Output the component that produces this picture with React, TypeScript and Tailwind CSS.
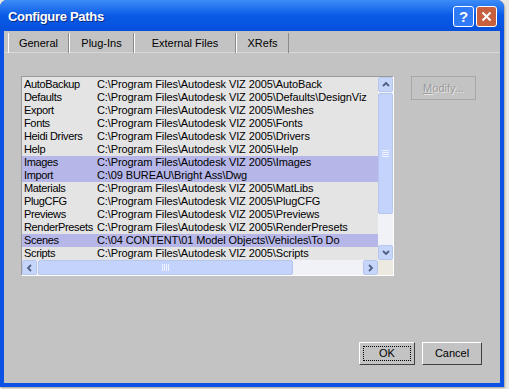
import React from 'react';

const rows: { name: string; path: string; sel?: boolean }[] = [
  { name: 'AutoBackup', path: 'C:\\Program Files\\Autodesk VIZ 2005\\AutoBack' },
  { name: 'Defaults', path: 'C:\\Program Files\\Autodesk VIZ 2005\\Defaults\\DesignViz' },
  { name: 'Export', path: 'C:\\Program Files\\Autodesk VIZ 2005\\Meshes' },
  { name: 'Fonts', path: 'C:\\Program Files\\Autodesk VIZ 2005\\Fonts' },
  { name: 'Heidi Drivers', path: 'C:\\Program Files\\Autodesk VIZ 2005\\Drivers' },
  { name: 'Help', path: 'C:\\Program Files\\Autodesk VIZ 2005\\Help' },
  { name: 'Images', path: 'C:\\Program Files\\Autodesk VIZ 2005\\Images', sel: true },
  { name: 'Import', path: 'C:\\09 BUREAU\\Bright Ass\\Dwg', sel: true },
  { name: 'Materials', path: 'C:\\Program Files\\Autodesk VIZ 2005\\MatLibs' },
  { name: 'PlugCFG', path: 'C:\\Program Files\\Autodesk VIZ 2005\\PlugCFG' },
  { name: 'Previews', path: 'C:\\Program Files\\Autodesk VIZ 2005\\Previews' },
  { name: 'RenderPresets', path: 'C:\\Program Files\\Autodesk VIZ 2005\\RenderPresets' },
  { name: 'Scenes', path: 'C:\\04 CONTENT\\01 Model Objects\\Vehicles\\To Do', sel: true },
  { name: 'Scripts', path: 'C:\\Program Files\\Autodesk VIZ 2005\\Scripts' },
];

const tabs = [
  { label: 'General', w: 'w-[61px]' },
  { label: 'Plug-Ins', w: 'w-[65px]' },
  { label: 'External Files', w: 'w-[102px]' },
  { label: 'XRefs', w: 'w-[53px]' },
];

const Chevron = ({ dir }: { dir: 'up' | 'down' | 'left' | 'right' }) => {
  const d = {
    up: 'M2 6 L5 3 L8 6',
    down: 'M2 3 L5 6 L8 3',
    left: 'M6 2 L3 5 L6 8',
    right: 'M3 2 L6 5 L3 8',
  }[dir];
  return (
    <svg width="10" height="10" viewBox="0 0 10 10">
      <path d={d} fill="none" stroke="#4d6185" strokeWidth="1.8" />
    </svg>
  );
};

const ScrollBtn = ({ dir }: { dir: 'up' | 'down' | 'left' | 'right' }) => (
  <div className="w-[15px] h-[15px] shrink-0 flex items-center justify-center rounded-[2px] border border-[#b7c6ec] bg-[#c6d6fb]">
    <Chevron dir={dir} />
  </div>
);

export default function App() {
  return (
    <div className="w-[509px] h-[389px] bg-[#e9e8e2] font-['Liberation_Sans',Arial,sans-serif]">
      <div className="w-[504px] h-[387px] rounded-t-[7px] bg-[#0b52e4] flex flex-col shadow-[1px_1px_2px_rgba(0,0,0,0.3)]">
        <div className="h-[31px] shrink-0 flex items-center pl-[8px] pr-[7px] pt-[2px] rounded-t-[7px] bg-gradient-to-b from-[#3c8cf8] via-[#0a5ae6] to-[#0550dc]">
          <span className="text-white font-bold text-[13px] tracking-[-0.3px] [text-shadow:1px_1px_0_#0a2a80]">Configure Paths</span>
          <div className="ml-auto flex gap-[2px]">
            <div className="w-[21px] h-[21px] rounded-[3px] border border-white bg-[#2f7af6] flex items-center justify-center text-white font-bold text-[15px] leading-none">?</div>
            <div className="w-[21px] h-[21px] rounded-[3px] border border-white bg-[#c8603f] flex items-center justify-center">
              <svg width="11" height="11" viewBox="0 0 11 11">
                <path d="M1.5 1.5 L9.5 9.5 M9.5 1.5 L1.5 9.5" stroke="white" strokeWidth="2" />
              </svg>
            </div>
          </div>
        </div>
        <div className="flex-1 mx-[4px] mb-[4px] bg-[#c3c3c3] flex flex-col">
          <div className="flex pl-[4px] pt-[2px] h-[22px] border-b border-[#d8d8d8]">
            {tabs.map((t) => (
              <div
                key={t.label}
                className={`${t.w} h-[20px] flex items-center justify-center text-[11px] text-black border-r border-r-[#8a8a8a] border-l border-l-white`}
              >
                {t.label}
              </div>
            ))}
          </div>
          <div className="flex pl-[17px] pt-[23px]">
            <div className="w-[373px] h-[200px] border-t border-l border-t-[#9a9a9a] border-l-[#9a9a9a] border-b border-r border-b-white border-r-white flex flex-col">
              <div className="flex flex-1 min-h-0">
                <div className="flex-1 bg-[#e4e4e4] pt-[1px] overflow-hidden">
                  {rows.map((r) => (
                    <div
                      key={r.name}
                      className={`flex h-[13px] items-center text-[11px] leading-[13px] text-black whitespace-nowrap pl-[2px] ${
                        r.sel ? 'bg-[#b6b6e8]' : ''
                      }`}
                    >
                      <span className="w-[73px] shrink-0 tracking-[-0.35px]">{r.name}</span>
                      <span className="tracking-[-0.1px]">{r.path}</span>
                    </div>
                  ))}
                </div>
                <div className="w-[15px] flex flex-col bg-[#f1f2f8]">
                  <ScrollBtn dir="up" />
                  <div className="h-[121px] mt-[1px] rounded-[2px] border border-[#b7c6ec] bg-[#c3d3fb] flex items-center justify-center">
                    <div className="flex flex-col gap-[1px]">
                      <div className="w-[7px] h-px bg-[#eef3ff]" />
                      <div className="w-[7px] h-px bg-[#eef3ff]" />
                      <div className="w-[7px] h-px bg-[#eef3ff]" />
                      <div className="w-[7px] h-px bg-[#eef3ff]" />
                    </div>
                  </div>
                  <div className="flex-1" />
                  <ScrollBtn dir="down" />
                </div>
              </div>
              <div className="flex h-[15px]">
                <div className="flex-1 flex bg-[#f1f2f8]">
                  <ScrollBtn dir="left" />
                  <div className="w-[255px] ml-[1px] rounded-[2px] border border-[#b7c6ec] bg-[#c3d3fb] flex items-center justify-center">
                    <div className="flex gap-[1px]">
                      <div className="w-px h-[7px] bg-[#eef3ff]" />
                      <div className="w-px h-[7px] bg-[#eef3ff]" />
                      <div className="w-px h-[7px] bg-[#eef3ff]" />
                      <div className="w-px h-[7px] bg-[#eef3ff]" />
                    </div>
                  </div>
                  <div className="flex-1" />
                  <ScrollBtn dir="right" />
                </div>
                <div className="w-[15px] bg-[#ebe9e0]" />
              </div>
            </div>
            <div className="ml-[17px] w-[65px] h-[24px] border border-[#a8a8a8] bg-[#c3c3c3] flex items-center justify-center text-[11px] text-[#9a9a9a] [text-shadow:1px_1px_0_#e8e8e8]">
              <span>
                <span className="underline">M</span>odify...
              </span>
            </div>
          </div>
          <div className="mt-auto mb-[18px] flex justify-end gap-[7px] pr-[18px]">
            <div className="w-[56px] h-[23px] border border-t-white border-l-white border-b-[#404040] border-r-[#404040] flex items-center justify-center p-[3px]">
              <div className="w-full h-full border border-dotted border-black flex items-center justify-center text-[11px] text-black">OK</div>
            </div>
            <div className="w-[60px] h-[23px] border border-t-white border-l-white border-b-[#404040] border-r-[#404040] flex items-center justify-center text-[11px] text-black">
              Cancel
            </div>
          </div>
        </div>
      </div>
    </div>
  );
}
